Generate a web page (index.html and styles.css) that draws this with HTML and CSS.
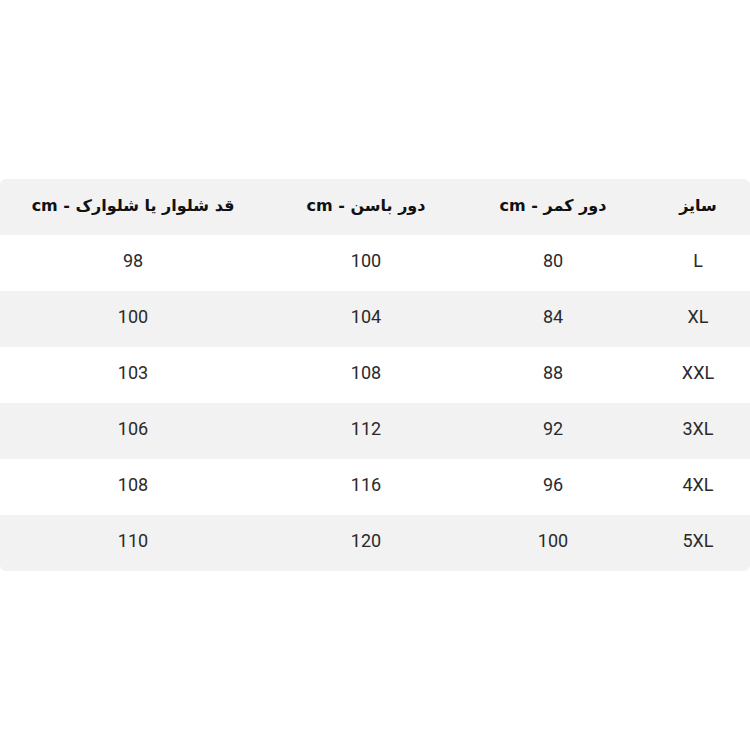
FILE: index.html
```html
<!DOCTYPE html>
<html lang="fa">
<head>
<meta charset="utf-8">
<link rel="stylesheet" href="styles.css">
</head>
<body>
<div class="page">
  <table class="sizes" dir="rtl">
    <colgroup>
      <col class="c-size">
      <col class="c-waist">
      <col class="c-hip">
      <col class="c-len">
    </colgroup>
    <thead>
      <tr>
        <th>سایز</th>
        <th>دور کمر - cm</th>
        <th>دور باسن - cm</th>
        <th class="len">قد شلوار یا شلوارک - cm</th>
      </tr>
    </thead>
    <tbody>
      <tr><td>L</td><td>80</td><td>100</td><td class="len">98</td></tr>
      <tr><td>XL</td><td>84</td><td>104</td><td class="len">100</td></tr>
      <tr><td>XXL</td><td>88</td><td>108</td><td class="len">103</td></tr>
      <tr><td>3XL</td><td>92</td><td>112</td><td class="len">106</td></tr>
      <tr><td>4XL</td><td>96</td><td>116</td><td class="len">108</td></tr>
      <tr><td>5XL</td><td>100</td><td>120</td><td class="len">110</td></tr>
    </tbody>
  </table>
</div>
</body>
</html>
```
FILE: styles.css
```css
html, body {
  margin: 0;
  padding: 0;
  background: #ffffff;
}
.page {
  padding-top: 179px;
}
.sizes {
  width: 750px;
  table-layout: fixed;
  border-collapse: separate;
  border-spacing: 0;
  border-radius: 6px;
  overflow: hidden;
  font-family: Roboto, "DejaVu Sans", sans-serif;
}
.c-size { width: 104px; }
.c-waist { width: 186px; }
.c-hip { width: 188px; }
.c-len { width: 272px; }
.sizes th,
.sizes td {
  height: 50px;
  padding: 0 0 6px 0;
  text-align: center;
  vertical-align: middle;
}
.sizes th {
  background: #f2f2f2;
  color: #111111;
  font-family: "DejaVu Sans", Roboto, sans-serif;
  font-weight: bold;
  font-size: 16px;
  padding-bottom: 4px;
  height: 52px;
}
.sizes .len {
  padding-right: 6px;
}
.sizes td {
  color: #2a2a2a;
  font-size: 18px;
}
.sizes tbody tr:nth-child(even) td {
  background: #f2f2f2;
}
.sizes tbody tr:nth-child(odd) td {
  background: #ffffff;
}
```
